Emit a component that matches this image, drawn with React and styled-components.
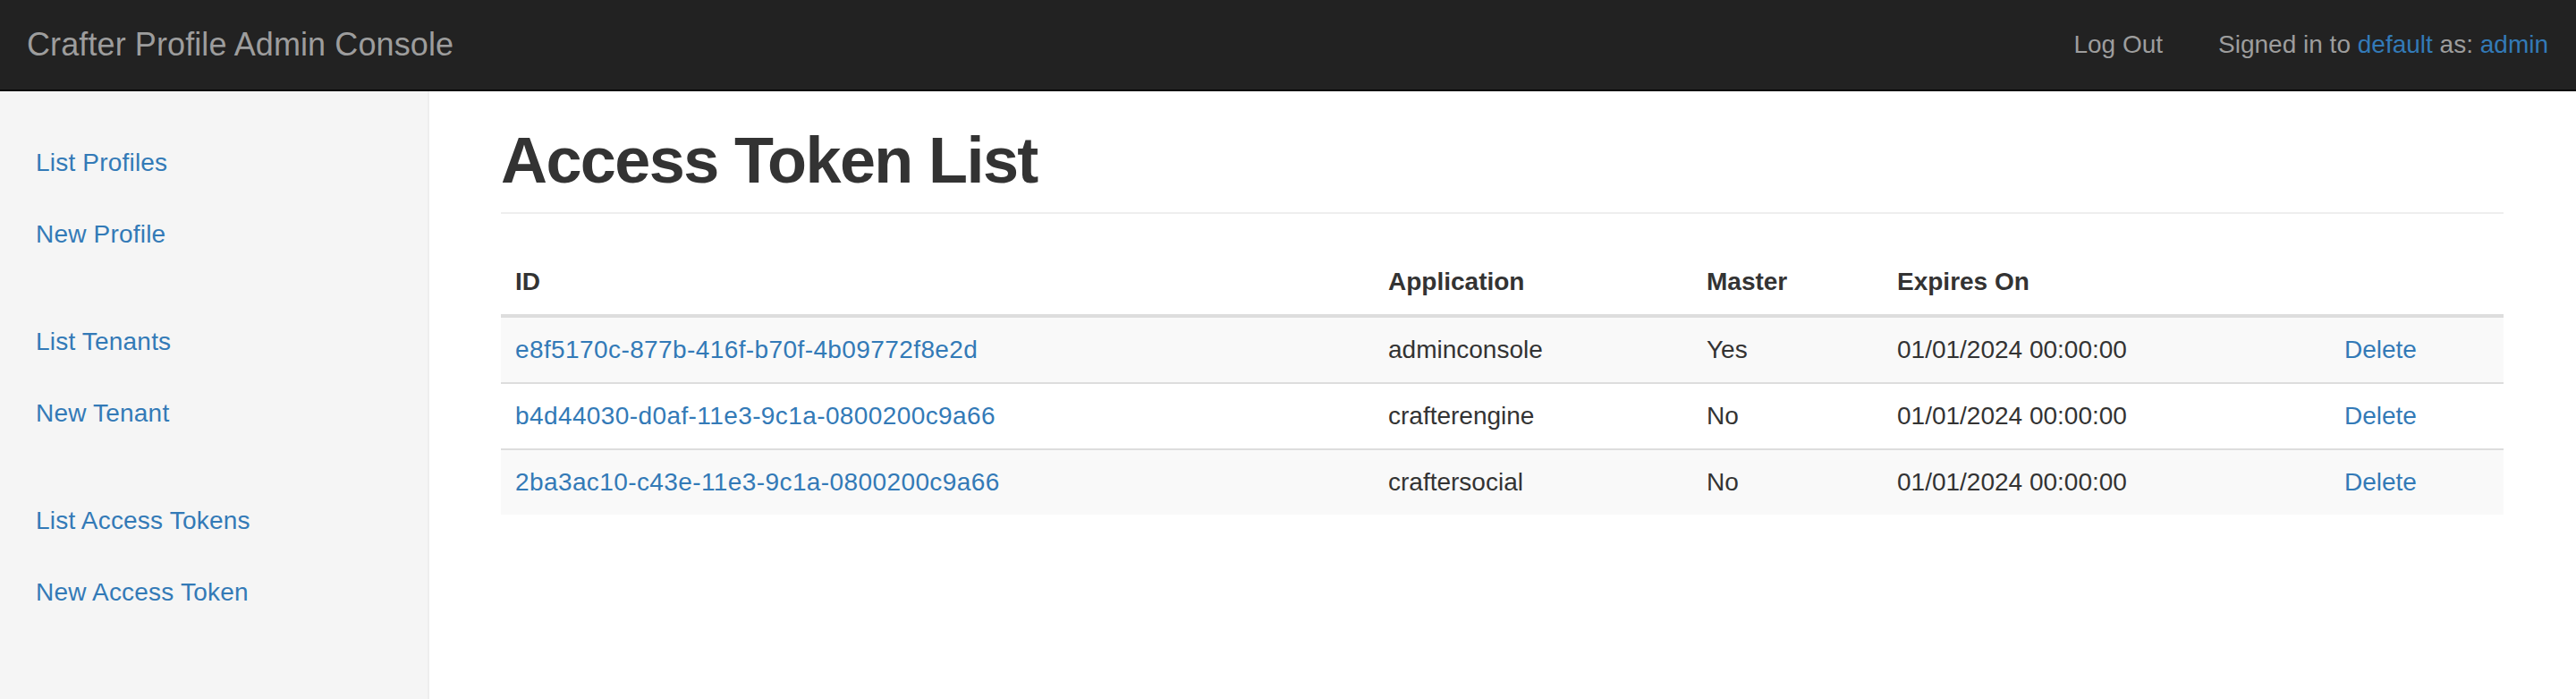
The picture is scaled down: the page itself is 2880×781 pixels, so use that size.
import React from 'react'
import styled, { createGlobalStyle } from 'styled-components'

const GlobalStyle = createGlobalStyle`
  html, body { margin: 0; padding: 0; }
  body {
    font-family: "Liberation Sans", Helvetica, Arial, sans-serif;
    font-size: 28px;
    line-height: 40px;
    color: #333;
    background: #fff;
  }
  * { box-sizing: border-box; }
  a { color: #337ab7; text-decoration: none; }
`

const Navbar = styled.nav`
  display: flex;
  align-items: center;
  justify-content: space-between;
  height: 102px;
  background-color: #222;
  border-bottom: 2px solid #080808;
  padding: 0 31px 0 30px;
`
const Brand = styled.a`
  font-size: 36px;
  line-height: 40px;
  color: #9d9d9d;
  letter-spacing: 0.1px;
`
const NavRight = styled.div`
  display: flex;
  align-items: center;
  gap: 62px;
  color: #9d9d9d;
  a.logout { color: #9d9d9d; }
`

const Layout = styled.div`
  display: flex;
  min-height: calc(100vh - 102px);
`
const Sidebar = styled.aside`
  width: 480px;
  flex-shrink: 0;
  background-color: #f5f5f5;
  border-right: 2px solid #eee;
  padding-top: 40px;
`
const NavGroup = styled.ul`
  list-style: none;
  margin: 0 0 40px;
  padding: 0;
`
const NavLink = styled.a`
  display: block;
  padding: 20px 40px;
  letter-spacing: 0.2px;
`

const Main = styled.main`
  flex: 1;
  padding: 38px 81px 40px 80px;
`
const PageHeader = styled.div`
  padding-bottom: 18px;
  margin-bottom: 40px;
  border-bottom: 2px solid #eee;
`
const Title = styled.h1`
  margin: 0;
  font-size: 72px;
  font-weight: 700;
  letter-spacing: -1.6px;
  line-height: 1.1;
`

const Table = styled.table`
  width: 100%;
  border-collapse: collapse;
  border-spacing: 0;
  th {
    text-align: left;
    font-weight: bold;
    vertical-align: bottom;
    padding: 16px;
    border-bottom: 4px solid #ddd;
  }
  td {
    padding: 16px;
    border-top: 2px solid #ddd;
    vertical-align: top;
  }
  td a.id { letter-spacing: 0.4px; }
  tbody tr:nth-of-type(odd) { background-color: #f9f9f9; }
`

const tokens = [
  { id: 'e8f5170c-877b-416f-b70f-4b09772f8e2d', app: 'adminconsole', master: 'Yes' },
  { id: 'b4d44030-d0af-11e3-9c1a-0800200c9a66', app: 'crafterengine', master: 'No' },
  { id: '2ba3ac10-c43e-11e3-9c1a-0800200c9a66', app: 'craftersocial', master: 'No' },
]

function App() {
  return (
    <>
      <GlobalStyle />
      <Navbar>
        <Brand href="#">Crafter Profile Admin Console</Brand>
        <NavRight>
          <a className="logout" href="#">Log Out</a>
          <span>Signed in to <a href="#">default</a> as: <a href="#">admin</a></span>
        </NavRight>
      </Navbar>
      <Layout>
        <Sidebar>
          <NavGroup>
            <li><NavLink href="#">List Profiles</NavLink></li>
            <li><NavLink href="#">New Profile</NavLink></li>
          </NavGroup>
          <NavGroup>
            <li><NavLink href="#">List Tenants</NavLink></li>
            <li><NavLink href="#">New Tenant</NavLink></li>
          </NavGroup>
          <NavGroup>
            <li><NavLink href="#">List Access Tokens</NavLink></li>
            <li><NavLink href="#">New Access Token</NavLink></li>
          </NavGroup>
        </Sidebar>
        <Main>
          <PageHeader>
            <Title>Access Token List</Title>
          </PageHeader>
          <Table>
            <colgroup>
              <col style={{ width: 976 }} />
              <col style={{ width: 356 }} />
              <col style={{ width: 213 }} />
              <col style={{ width: 500 }} />
              <col />
            </colgroup>
            <thead>
              <tr>
                <th>ID</th>
                <th>Application</th>
                <th>Master</th>
                <th>Expires On</th>
                <th></th>
              </tr>
            </thead>
            <tbody>
              {tokens.map((t) => (
                <tr key={t.id}>
                  <td><a className="id" href="#">{t.id}</a></td>
                  <td>{t.app}</td>
                  <td>{t.master}</td>
                  <td>01/01/2024 00:00:00</td>
                  <td><a href="#">Delete</a></td>
                </tr>
              ))}
            </tbody>
          </Table>
        </Main>
      </Layout>
    </>
  )
}

export default App
